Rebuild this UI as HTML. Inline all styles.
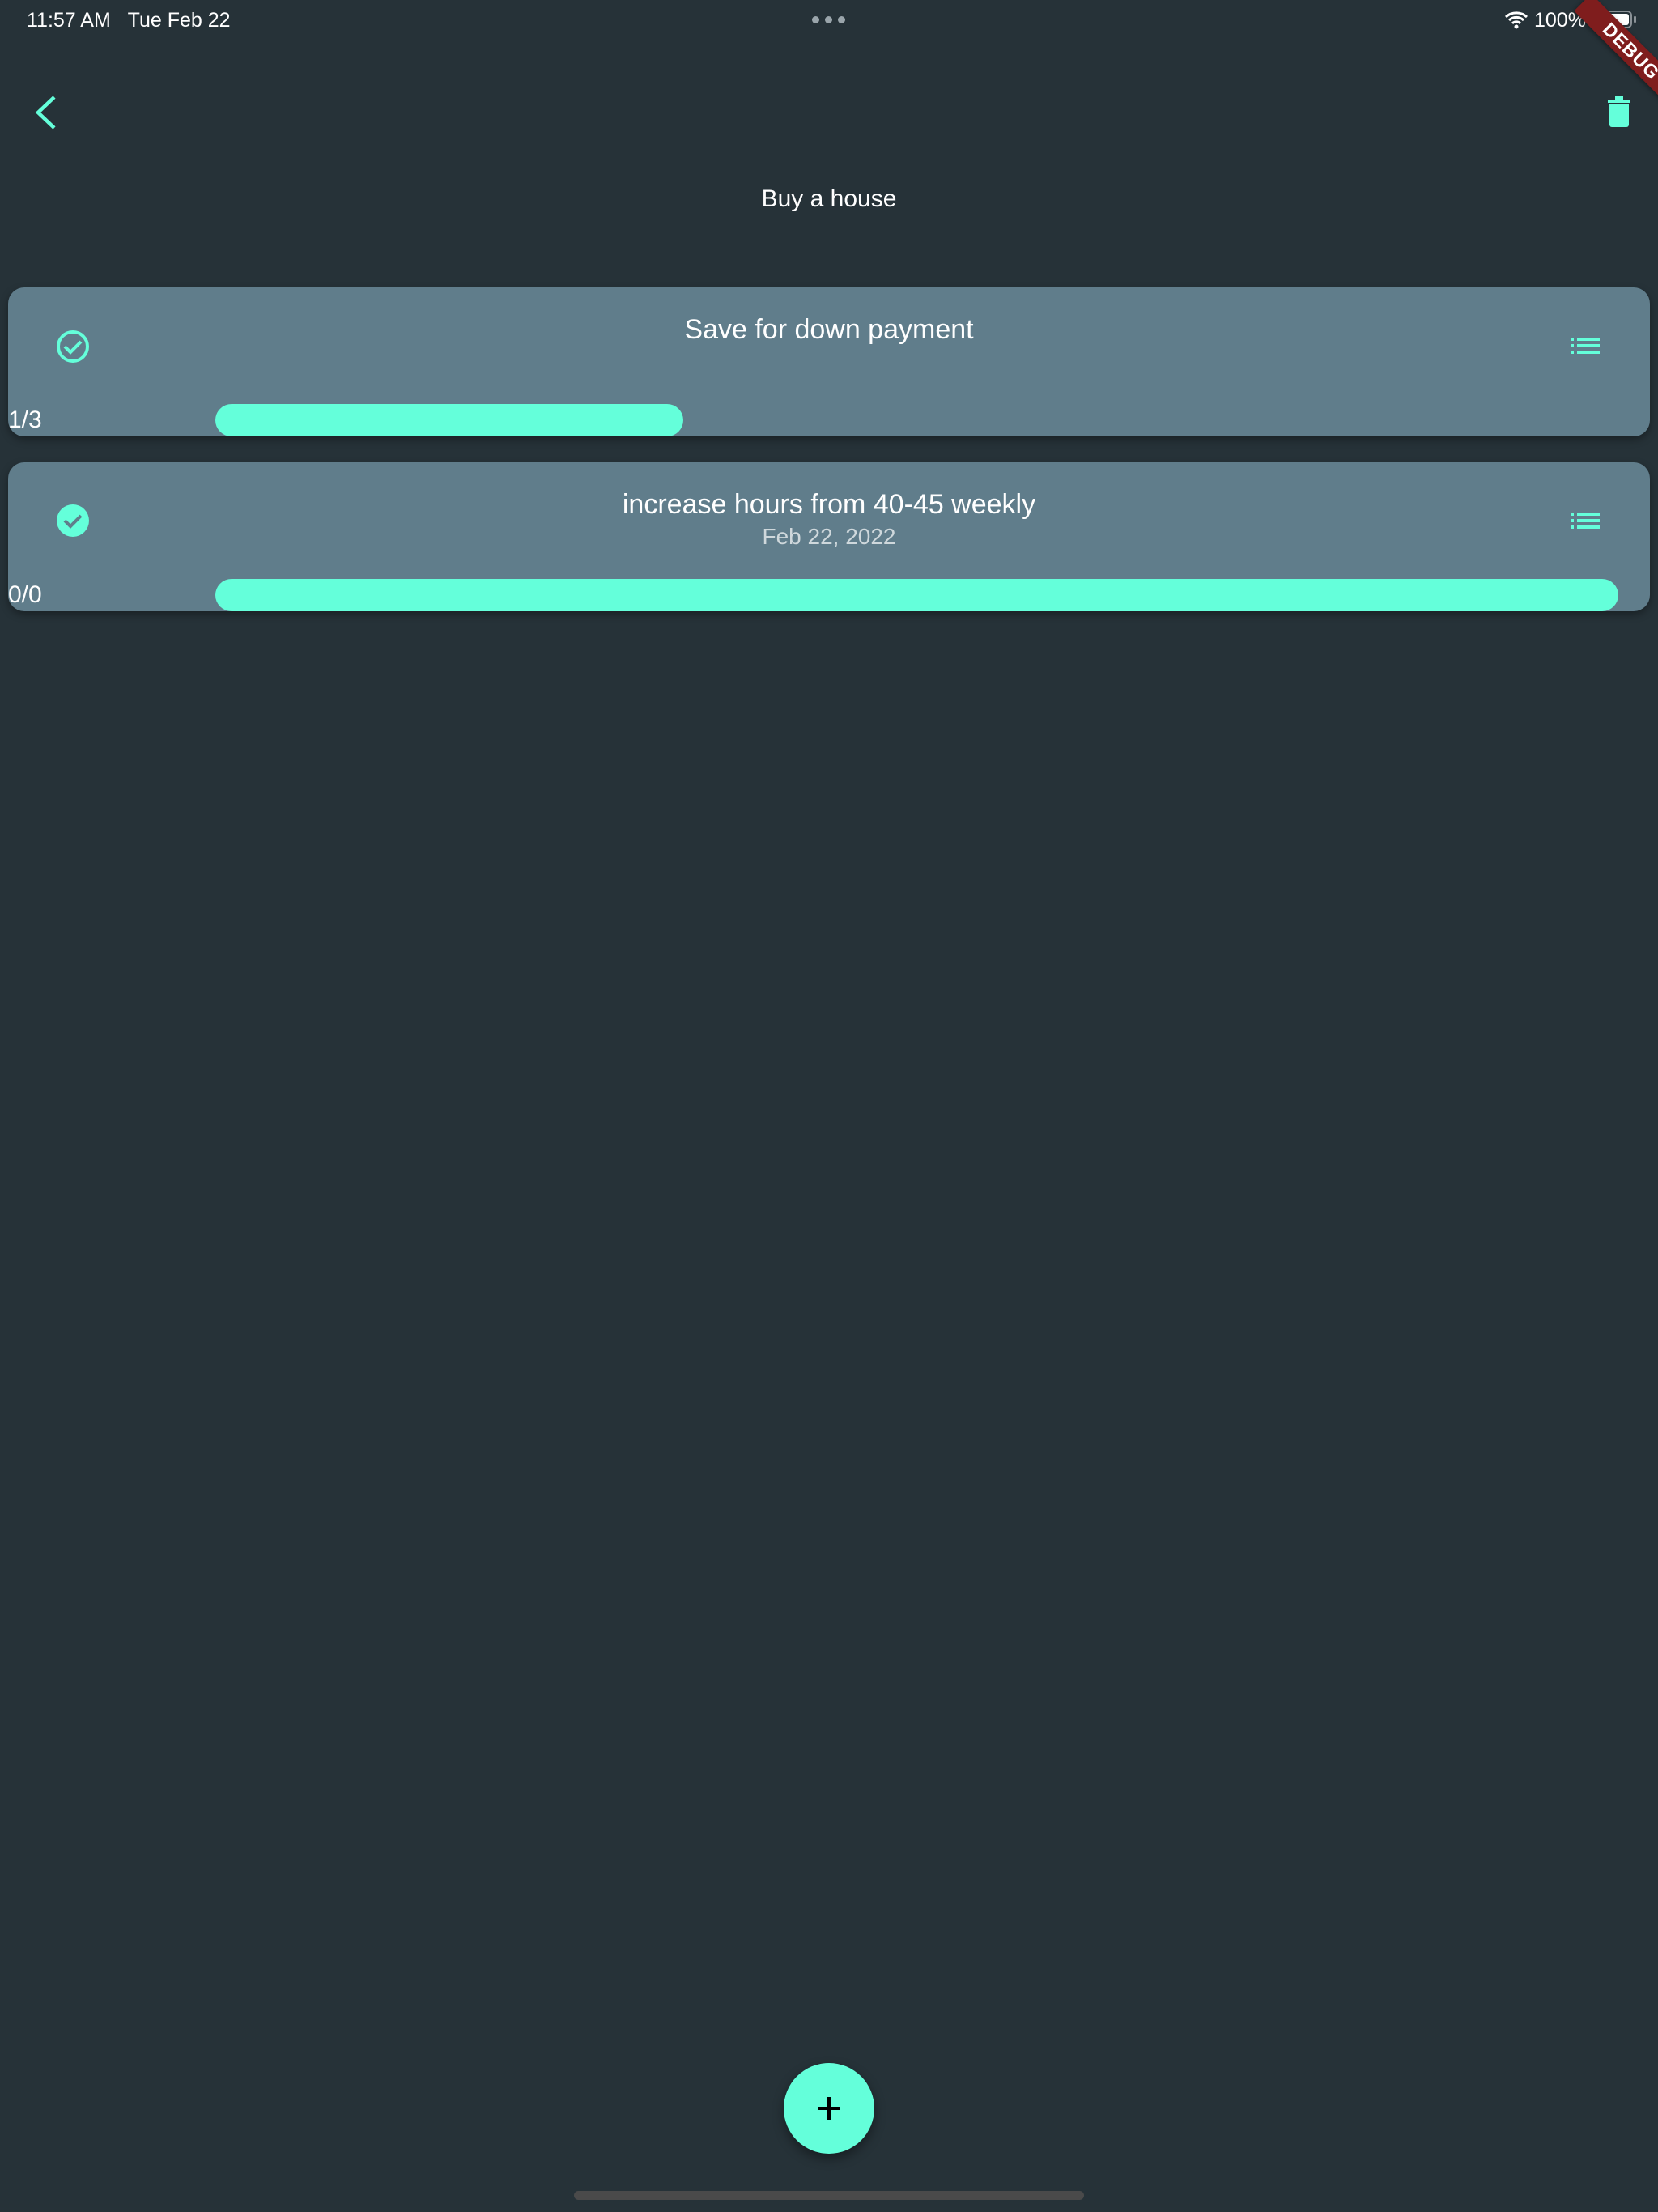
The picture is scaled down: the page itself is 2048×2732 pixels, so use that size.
<!DOCTYPE html>
<html><head><meta charset="utf-8"><style>
*{margin:0;padding:0;box-sizing:border-box}
html,body{width:2048px;height:2732px;overflow:hidden;background:#263238;font-family:"Liberation Sans",sans-serif;color:#fff;position:relative}
.abs{position:absolute}
.card{position:absolute;left:10px;width:2028px;background:#607D8B;border-radius:20px;box-shadow:0 4px 10px rgba(0,0,0,0.35)}
.t{position:absolute;left:0;width:100%;text-align:center;white-space:nowrap}
.bar{position:absolute;left:256px;height:40px;background:#64FFDA;border-radius:20px}
.lbl{position:absolute;left:0;font-size:30px;line-height:40px;color:#fff}
</style></head><body>
<div class="abs" style="left:33px;top:8px;font-size:25px;line-height:34px">11:57 AM&nbsp;&nbsp;&nbsp;Tue Feb 22</div>
<div class="abs" style="left:1003px;top:20px;width:9px;height:9px;border-radius:50%;background:#9aa5ab"></div>
<div class="abs" style="left:1019px;top:20px;width:9px;height:9px;border-radius:50%;background:#9aa5ab"></div>
<div class="abs" style="left:1035px;top:20px;width:9px;height:9px;border-radius:50%;background:#9aa5ab"></div>
<svg class="abs" style="left:1858px;top:12px" width="30" height="24" viewBox="0 0 30 24"><path d="M2 9a19 19 0 0 1 26 0M6 13a13 13 0 0 1 18 0M10 17a7 7 0 0 1 10 0" stroke="#fff" stroke-width="3" fill="none"/><circle cx="15" cy="21" r="2.5" fill="#fff"/></svg>
<div class="abs" style="left:1895px;top:8px;font-size:25px;line-height:34px">100%</div>
<div class="abs" style="left:1966px;top:13px;width:50px;height:22px;border:2px solid #8a9196;border-radius:6px;padding:2px"><div style="width:100%;height:100%;background:#fff;border-radius:3px"></div></div>
<div class="abs" style="left:2018px;top:20px;width:3px;height:8px;background:#8a9196;border-radius:1px"></div>
<div class="abs" style="left:1930px;top:48px;width:170px;height:30px;background:#7f1d1d;transform:rotate(45deg);transform-origin:center;color:#fff;font-weight:bold;font-size:23px;line-height:30px;text-align:center;letter-spacing:1px;box-shadow:0 2px 6px rgba(0,0,0,.4)">DEBUG</div>
<svg class="abs" style="left:40px;top:116px" width="32" height="46" viewBox="0 0 32 46"><path d="M27 4L7 23l20 19" stroke="#64FFDA" stroke-width="4.5" fill="none"/></svg>
<svg class="abs" style="left:1984px;top:118px" width="32" height="40" viewBox="0 0 32 40"><rect x="2" y="5" width="28" height="4" fill="#64FFDA"/><rect x="11" y="1" width="10" height="5" fill="#64FFDA"/><path d="M4 11h24v25a3 3 0 0 1-3 3H7a3 3 0 0 1-3-3z" fill="#64FFDA"/></svg>
<div class="t" style="top:226px;font-size:30px;line-height:40px;font-weight:500">Buy a house</div>

<div class="card" style="top:355px;height:184px">
  <svg class="abs" style="left:59px;top:52px" width="42" height="42" viewBox="0 0 42 42"><circle cx="21" cy="21" r="18" stroke="#64FFDA" stroke-width="4" fill="none"/><path d="M11 21l7 7 13-13" stroke="#64FFDA" stroke-width="4" fill="none"/></svg>
  <div class="t" style="top:32px;font-size:34px;line-height:40px">Save for down payment</div>
  <svg class="abs" style="left:1930px;top:60px" width="40" height="24"><rect x="0" y="2" width="4" height="4" fill="#64FFDA"/><rect x="8" y="2" width="28" height="4" fill="#64FFDA"/><rect x="0" y="10" width="4" height="4" fill="#64FFDA"/><rect x="8" y="10" width="28" height="4" fill="#64FFDA"/><rect x="0" y="18" width="4" height="4" fill="#64FFDA"/><rect x="8" y="18" width="28" height="4" fill="#64FFDA"/></svg>
  <div class="lbl" style="top:144px">1/3</div>
  <div class="bar" style="top:144px;width:578px"></div>
</div>

<div class="card" style="top:571px;height:184px">
  <svg class="abs" style="left:59px;top:51px" width="42" height="42" viewBox="0 0 42 42"><circle cx="21" cy="21" r="20" fill="#64FFDA"/><path d="M11 21l7 7 13-13" stroke="#607D8B" stroke-width="4" fill="none"/></svg>
  <div class="t" style="top:32px;font-size:34px;line-height:40px">increase hours from 40-45 weekly</div>
  <div class="t" style="top:74px;font-size:28px;line-height:36px;color:#cfd8dc">Feb 22, 2022</div>
  <svg class="abs" style="left:1930px;top:60px" width="40" height="24"><rect x="0" y="2" width="4" height="4" fill="#64FFDA"/><rect x="8" y="2" width="28" height="4" fill="#64FFDA"/><rect x="0" y="10" width="4" height="4" fill="#64FFDA"/><rect x="8" y="10" width="28" height="4" fill="#64FFDA"/><rect x="0" y="18" width="4" height="4" fill="#64FFDA"/><rect x="8" y="18" width="28" height="4" fill="#64FFDA"/></svg>
  <div class="lbl" style="top:144px">0/0</div>
  <div class="bar" style="top:144px;width:1733px"></div>
</div>

<div class="abs" style="left:968px;top:2548px;width:112px;height:112px;border-radius:50%;background:#64FFDA;box-shadow:0 6px 14px rgba(0,0,0,.4)">
  <div class="abs" style="left:42px;top:54px;width:28px;height:4px;background:#000"></div>
  <div class="abs" style="left:54px;top:42px;width:4px;height:28px;background:#000"></div>
</div>
<div class="abs" style="left:709px;top:2706px;width:630px;height:11px;border-radius:6px;background:#4a4a4a"></div>
</body></html>
